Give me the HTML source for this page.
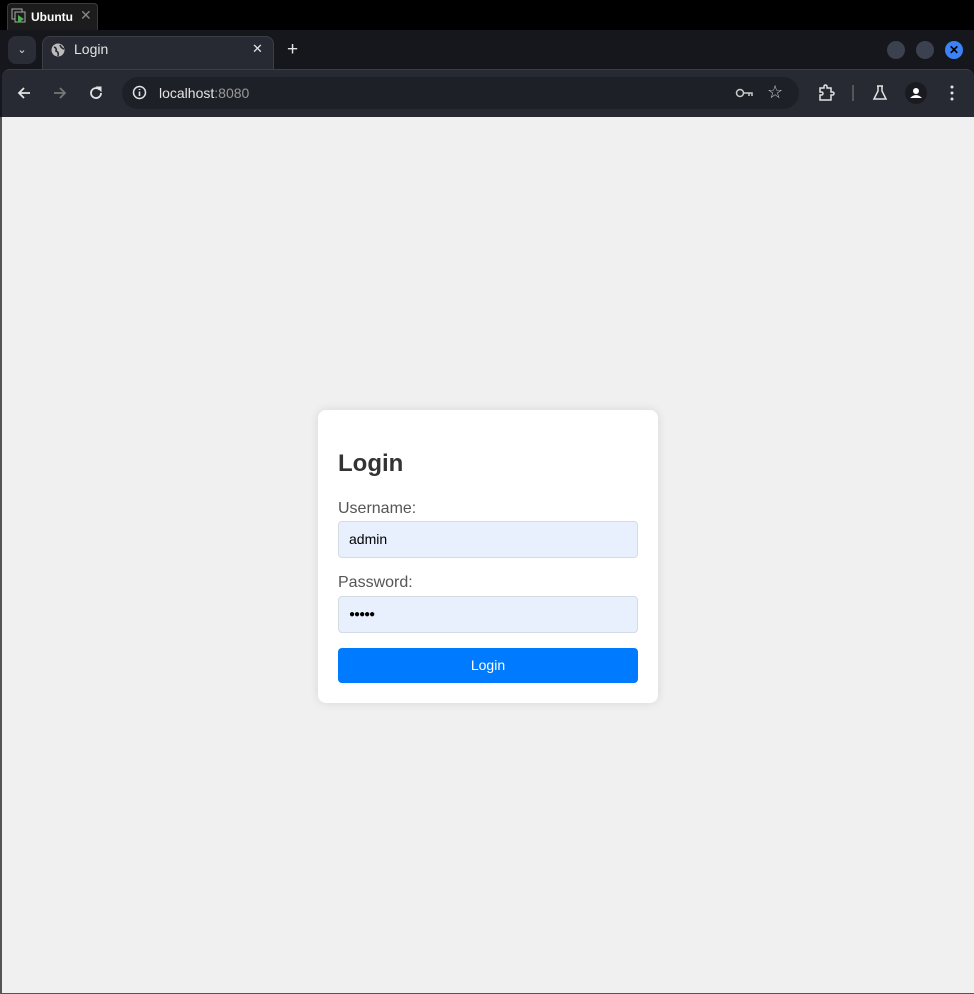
<!DOCTYPE html>
<html><head><meta charset="utf-8"><style>
*{box-sizing:border-box;margin:0;padding:0}
body{width:974px;height:994px;background:#000;font-family:"Liberation Sans",sans-serif;position:relative;overflow:hidden}
.abs{position:absolute}
.ubtab{left:7px;top:3px;width:91px;height:27px;background:#1c1c1c;border:1px solid #3a3a3a;border-bottom:none;border-radius:4px 4px 0 0}
.chrome{left:0;top:30px;width:974px;height:87px;background:#16171c}
.tab{left:42px;top:36px;width:232px;height:34px;background:#282a33;border-radius:8px 8px 0 0;border:1px solid #3b3d47;border-bottom:none}
.bar{left:2px;top:69px;width:972px;height:48px;background:#282a33;border-top:1px solid #3b3d47;border-radius:8px 8px 0 0}
.omni{left:122px;top:77px;width:677px;height:32px;background:#1e2027;border-radius:16px}
.page{left:2px;top:117px;width:972px;height:876px;background:#f0f0f0}
.card{left:318px;top:410px;width:340px;height:293px;background:#fff;border-radius:8px;box-shadow:0 0 10px rgba(0,0,0,.1)}
.lbl{font-size:16px;color:#555}
.inp{width:300px;height:37px;background:#e8f0fe;border:1px solid #d5dbe3;border-radius:4px;font-size:14px;color:#000;padding-left:10px;line-height:35px}
.btn{left:338px;top:648px;width:300px;height:35px;background:#007bff;border-radius:4px;color:#fff;font-size:14px;text-align:center;line-height:35px}
.circ{width:18px;height:18px;border-radius:50%;background:#3c4150;top:41px}
</style></head><body>
<div class="abs ubtab"></div>
<svg class="abs" style="left:11px;top:8px" width="16" height="16"><rect x="1" y="1" width="10" height="10" fill="none" stroke="#aaa"/><rect x="4" y="4" width="10" height="10" fill="#1c1c1c" stroke="#aaa"/><path d="M7 7 L13 11 L7 15Z" fill="#4caf50"/></svg>
<div class="abs" style="left:31px;top:10px;color:#fff;font-size:12px;font-weight:bold">Ubuntu</div>
<div class="abs" style="left:80px;top:7px;color:#888;font-size:14px">✕</div>
<div class="abs chrome"></div>
<div class="abs" style="left:8px;top:36px;width:28px;height:28px;background:#2b2d36;border-radius:8px;color:#ddd;font-size:11px;text-align:center;line-height:28px">⌄</div>
<div class="abs tab"></div>
<svg class="abs" style="left:51px;top:43px" width="14" height="14"><circle cx="7" cy="7" r="6.5" fill="#bbb"/><path d="M3 4 Q6 5 5 8 Q8 9 7 13 M9 2 Q10 5 13 6" stroke="#282a33" stroke-width="1.6" fill="none"/></svg>
<div class="abs" style="left:74px;top:41px;color:#e3e3e3;font-size:14px">Login</div>
<div class="abs" style="left:252px;top:41px;color:#e3e3e3;font-size:13px">✕</div>
<div class="abs" style="left:287px;top:39px;color:#e3e3e3;font-size:19px">+</div>
<div class="abs circ" style="left:887px"></div>
<div class="abs circ" style="left:916px"></div>
<div class="abs circ" style="left:945px;background:#3b82f6;color:#000;font-size:12px;font-weight:bold;text-align:center;line-height:18px">✕</div>
<div class="abs bar"></div>
<svg class="abs" style="left:16px;top:85px" width="16" height="16"><path d="M14 8H3M8 3L3 8L8 13" stroke="#e3e3e3" stroke-width="1.8" fill="none"/></svg>
<svg class="abs" style="left:52px;top:85px" width="16" height="16"><path d="M2 8H13M8 3L13 8L8 13" stroke="#777" stroke-width="1.8" fill="none"/></svg>
<svg class="abs" style="left:88px;top:85px" width="16" height="16"><path d="M13 8A5 5 0 1 1 11.5 4.5" stroke="#e3e3e3" stroke-width="1.8" fill="none"/><path d="M9 2H13V6Z" fill="#e3e3e3" stroke="#e3e3e3"/></svg>
<div class="abs omni"></div>
<svg class="abs" style="left:132px;top:85px" width="15" height="15"><circle cx="7.5" cy="7.5" r="6" stroke="#e3e3e3" stroke-width="1.5" fill="none"/><path d="M7.5 6.5V11M7.5 4V5" stroke="#e3e3e3" stroke-width="1.6"/></svg>
<div class="abs" style="left:159px;top:85px;font-size:14px;color:#e3e3e3">localhost<span style="color:#999">:8080</span></div>
<svg class="abs" style="left:735px;top:86px" width="19" height="14"><circle cx="5" cy="7" r="3.5" stroke="#ccc" stroke-width="1.5" fill="none"/><path d="M8.5 7H17V10M14 7V10" stroke="#ccc" stroke-width="1.5" fill="none"/></svg>
<div class="abs" style="left:767px;top:82px;color:#ccc;font-size:18px">☆</div>
<svg class="abs" style="left:818px;top:84px" width="18" height="18"><path d="M2 4H6V2.5A1.5 1.5 0 0 1 9 2.5V4H13V8H14.5A1.5 1.5 0 0 1 14.5 11H13V16H2V11H3.5A1.5 1.5 0 0 0 3.5 8H2Z" stroke="#e3e3e3" stroke-width="1.5" fill="none"/></svg>
<div class="abs" style="left:852px;top:85px;width:2px;height:16px;background:#555"></div>
<svg class="abs" style="left:872px;top:84px" width="16" height="18"><path d="M5 2H11M6 2V7L2 15H14L10 7V2" stroke="#e3e3e3" stroke-width="1.5" fill="none"/></svg>
<div class="abs" style="left:905px;top:82px;width:22px;height:22px;border-radius:50%;background:#1a1b20"></div>
<svg class="abs" style="left:905px;top:82px" width="22" height="22"><circle cx="11" cy="9" r="3" fill="#fff"/><path d="M5 16Q11 10 17 16Z" fill="#fff"/></svg>
<svg class="abs" style="left:948px;top:84px" width="8" height="18"><circle cx="4" cy="3" r="1.5" fill="#e3e3e3"/><circle cx="4" cy="9" r="1.5" fill="#e3e3e3"/><circle cx="4" cy="15" r="1.5" fill="#e3e3e3"/></svg>
<div class="abs" style="left:0;top:117px;width:2px;height:877px;background:#555"></div>
<div class="abs page"></div>
<div class="abs" style="left:0;top:993px;width:974px;height:1px;background:#555"></div>
<div class="abs card"></div>
<div class="abs" style="left:338px;top:450px;font-size:24px;font-weight:bold;color:#333">Login</div>
<div class="abs lbl" style="left:338px;top:500px">Username:</div>
<div class="abs inp" style="left:338px;top:521px">admin</div>
<div class="abs lbl" style="left:338px;top:574px">Password:</div>
<div class="abs inp" style="left:338px;top:596px;font-size:10px;letter-spacing:-1px">●●●●●</div>
<div class="abs btn">Login</div>
</body></html>
